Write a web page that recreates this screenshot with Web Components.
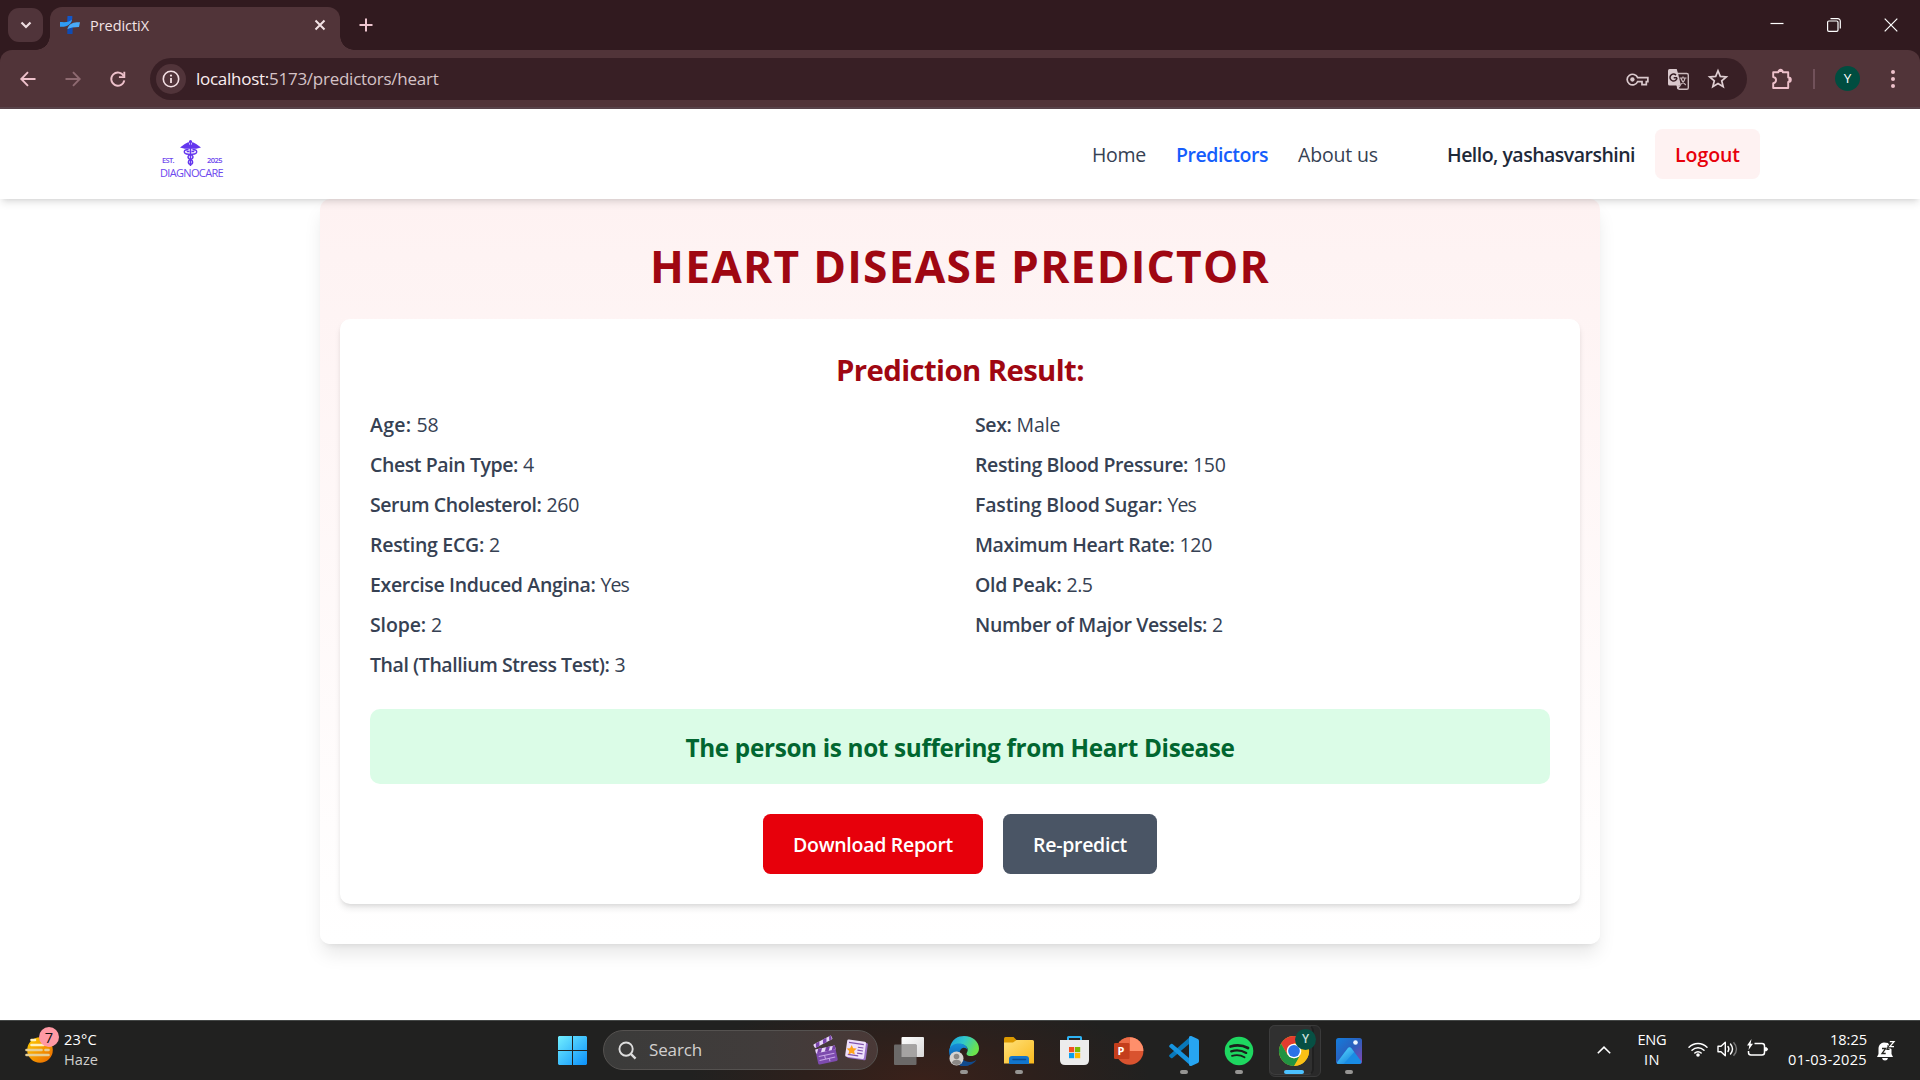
<!DOCTYPE html>
<html lang="en">
<head>
<meta charset="utf-8">
<title>PredictiX</title>
<style>
html,body{margin:0;padding:0;width:1920px;height:1080px;overflow:hidden;background:#fff}
body{font-family:"Open Sans","Noto Sans",sans-serif;font-size:19.5px;display:flex;flex-direction:column}
</style>
</head>
<body>
<browser-chrome></browser-chrome>
<site-header></site-header>
<predictor-page></predictor-page>
<task-bar></task-bar>
<script>
const ICONS = {
  down:['0 0 12 8','<path d="M1.5 1.5 6 6l4.500-4.500" fill="none" stroke="#eedde0" stroke-width="2.200"/>'],
  fav:['0 0 20 18','<path d="M7.500 0h4.800v2.500C12 6 9.500 8 7 9.500z" fill="#1257c9"/><path d="M12.500 18H7.300v-3c.4-3.500 3-5 5.600-6.500z" fill="#0f4cb4"/><path d="M0 6c5 .3 9 .5 12-2.500C11.600 7.500 8 11.300 0 10.800z" fill="#2f9cf5"/><path d="M20 6.300c-4-.2-11 .1-12.700 6.900C10 11.500 14 11.300 19 11z" fill="#49aaf8"/>'],
  x:['0 0 12 12','<path d="m1.500 1.500 9 9m0-9-9 9" stroke="#f2e2e5" stroke-width="2" fill="none"/>'],
  plus:['0 0 14 14','<path d="M7 .5v13M.5 7h13" stroke="#eec5cf" stroke-width="2"/>'],
  min:['0 0 14 14','<path d="M.5 5.500h13" stroke="#fff" stroke-width="1.200"/>'],
  restore:['0 0 14 14','<rect x=".6" y="3" width="10.400" height="10.400" rx="1.300" fill="none" stroke="#fff" stroke-width="1.200"/><path d="M3.500.7h7.300a2.500 2.500 0 0 1 2.500 2.500v7.300" fill="none" stroke="#fff" stroke-width="1.200"/>'],
  close:['0 0 14 14','<path d="m.7.7 12.600 12.600m0-12.600L.7 13.300" stroke="#fff" stroke-width="1.200"/>'],
  back:['0 0 16 16','<path d="M15.500 8H1.700M8 1.200 1.300 8 8 14.800" stroke="#eec1cb" stroke-width="1.900" fill="none"/>'],
  fwd:['0 0 16 16','<path d="M.5 8h13.800M8 1.200 14.700 8 8 14.800" stroke="#8e6a71" stroke-width="1.900" fill="none"/>'],
  reload:['0 0 17 17','<path d="M14.600 5.500A7 7 0 1 0 15.200 10" fill="none" stroke="#eec1cb" stroke-width="2"/><path d="M15.200.8v5.700H9.500" fill="none" stroke="#eec1cb" stroke-width="2"/>'],
  info:['0 0 18 18','<circle cx="9" cy="9" r="7.700" fill="none" stroke="#f3dfe3" stroke-width="1.600"/><path d="M9 8v5" stroke="#f3dfe3" stroke-width="1.800"/><circle cx="9" cy="5.600" r="1.100" fill="#f3dfe3"/>'],
  key:['0 0 24 14','<path d="M12.200 5h10.600v4.200h-1.600v3.300h-4.500V9.200h-4.500A5.700 5.700 0 1 1 12.200 5z" fill="none" stroke="#d9c8cc" stroke-width="1.800"/><circle cx="6.700" cy="7" r="2.300" fill="#d9c8cc"/>'],
  trans:['0 0 21 21','<path d="M9 4.500h9.700q1.600 0 1.600 1.600v12.600q0 1.600-1.600 1.600H11l-2-5" fill="none" stroke="#cbbabd" stroke-width="1.400"/><path d="M1.500 0h7.200l1.100 3.800L13 16.500H1.500Q0 16.500 0 15V1.500Q0 0 1.500 0z" fill="#d9c8cc"/><path d="M13 16.500 9.300 20.500 8.500 16z" fill="#d9c8cc"/><path d="M9 8.700H5.700M9 8.700a3.500 3.500 0 1 1-1-2.600" fill="none" stroke="#381f25" stroke-width="1.500"/><path d="M11.500 9h7M15 7.500V9m2 0c-.4 2.500-2 5-4.500 6.500M13 9.500c.8 2.500 2.500 4.700 4.800 6.500" fill="none" stroke="#cbbabd" stroke-width="1.200"/>'],
  star:['0 0 20 20','<path d="m10 1.800 2.300 5.600 6 .5-4.600 3.900 1.500 5.900-5.200-3.200-5.200 3.200 1.500-5.900L1.700 7.900l6-.5z" fill="none" stroke="#dfced2" stroke-width="1.700"/>'],
  puzzle:['0 0 22 22','<path d="M2.200 4.200H7.400C7.400 1 11.800 1 11.800 4.200H17.200V9.400C20.700 9.400 20.700 14 17.200 14V20H2.200V15.200C6 14.800 6 9.400 2.200 9z" fill="none" stroke="#eec1cb" stroke-width="1.900" stroke-linejoin="round"/><path d="M7.500 4c0-3.500 4.200-3.500 4.200 0zM17.400 9.500c3.500 0 3.500 4.300 0 4.300z" fill="#eec1cb"/>'],
  dots:['0 0 6 20','<g fill="#eec1cb"><circle cx="3" cy="3" r="2"/><circle cx="3" cy="10" r="2"/><circle cx="3" cy="17" r="2"/></g>'],
  caduceus:['0 0 22 27','<g fill="#6437ee"><circle cx="11" cy="1.700" r="1.700"/><path d="M0 7.500 5 4l4-2 1 3h2l1-3 4 2 5 3.500-5 1.300H5z"/><path d="M10.200 3h1.600v23h-1.600z"/></g><g fill="none" stroke="#6437ee" stroke-width="1.500"><path d="M9 9.500c-6 0-6 4.500 0 4.700 6 .4 5.500 4.600 2 5.300-3 .7-3 4.500 0 5"/><path d="M13 9.500c6 0 6 4.500 0 4.700-6 .4-5.500 4.600-2 5.300 3 .7 3 4.500 0 5"/><path d="M7 11.500h3M12 11.500h3"/></g>'],
  haze:['0 0 30 28','<defs><linearGradient id="h" x2="1" y2="1"><stop stop-color="#ffd000"/><stop offset="1" stop-color="#ea6500"/></linearGradient></defs><circle cx="15" cy="15" r="12.800" fill="url(#h)"/><g stroke-linecap="round" stroke-width="2.600"><path d="M6.500 5H10M6.500 10h12M23 10h3" stroke="#fff1bd"/><path d="M1.500 15h15M20.500 15h3M1.500 20h22" stroke="#e6cf96"/></g>'],
  start:['0 0 29 29','<defs><linearGradient id="sw" x1="0" y1="0" x2="29" y2="29" gradientUnits="userSpaceOnUse"><stop stop-color="#72efff"/><stop offset="1" stop-color="#0b90fa"/></linearGradient></defs><path d="M1 0h13v14H0V1zM15 0h13l1 1v13H15zM0 15h14v14H1l-1-1zM15 15h14v13l-1 1H15z" fill="url(#sw)"/>'],
  search:['0 0 20 20','<circle cx="8.500" cy="8.500" r="7" fill="none" stroke="#ddd" stroke-width="2"/><path d="m13.500 13.500 5 5" stroke="#ddd" stroke-width="2.400"/>'],
  clap:['0 0 25 28','<g transform="rotate(-12 12 20)"><rect x="3" y="10.500" width="20" height="15.500" rx="1.500" fill="#7d4bae"/><path d="M3 10.500h20v4H3z" fill="#e6d5f6"/><path d="m6 10.500-2 4h4l2-4zm8 0-2 4h4l2-4zm7 0-2 4h4v-4z" fill="#7640a5"/><path d="M5 18h16M5 22h16M11 18v4M15 22v3" stroke="#c7a5e6" stroke-width="1"/></g><g transform="rotate(-28 1 9)"><rect x="0" y="7" width="20" height="4" rx=".8" fill="#ead9fa"/><path d="m3 7-2 4h4l2-4zm8 0-2 4h4l2-4zm7 0-2 4h3l1-4z" fill="#7b45ae"/></g>'],
  news:['0 0 23 22','<g transform="rotate(8 11 11)"><rect x="3" y="2.500" width="19" height="17.500" rx="1.500" fill="#9870c5"/><rect x="1" y="1.500" width="19" height="17.500" rx="1.500" fill="#eee0fb"/><path d="M3 4.500h15M12.500 8H18M12.500 11H18M12.500 14H18M3.500 16.500H14" stroke="#8054ad" stroke-width="1.200"/></g><path d="m6.700 6 1.500 3.200 3.500.4-2.600 2.400.7 3.600-3.200-1.700-3.200 1.700.8-3.600-2.600-2.400 3.500-.4z" fill="#ffa31a"/>'],
  task:['0 0 30 28','<defs><linearGradient id="t" x2="1" y2="1"><stop stop-color="#fff"/><stop offset="1" stop-color="#d8d8d8"/></linearGradient></defs><rect x="7.500" width="22.500" height="20" rx="1" fill="url(#t)"/><rect y="7.500" width="22.500" height="20.500" rx="1" fill="#6b6968"/><path d="M7.500 7.500h15V20h-15z" fill="#a5a3a2"/>'],
  edge:['0 0 30 30','<defs><linearGradient id="e1" x2="1" y2=".4"><stop stop-color="#159ee0"/><stop offset=".5" stop-color="#32c8ca"/><stop offset="1" stop-color="#6be34c"/></linearGradient><linearGradient id="e2" x2="0" y2="1"><stop stop-color="#168fd9"/><stop offset="1" stop-color="#0b4fa5"/></linearGradient></defs><path d="M1 11C3 3 9 0 15 0c9 0 15 6 15 12.500 0 5-4 7.500-8 7.500-4.500 0-5-2-4-3.500 3-5-3-9-8-8.500-4 0-7 2-9 5z" fill="url(#e1)"/><path d="M0 15C0 10 5 7.500 10 7.500c4.500 0 8.500 2.500 8.500 6.500-1.500-3-6-3.500-7.500 1-1.500 5 3 11 9 14.200Q17.500 30 15 30C6.500 30 0 23 0 15z" fill="url(#e2)"/><path d="M10.500 14.500c-2 6 4 11.500 10.500 11.500 3 0 5-1.200 6.500-2.200C25 28 20 30 15 30c-7 0-10-10-4.500-15.500z" fill="#104a8d"/><circle cx="7.500" cy="22.500" r="7" fill="#d5d2cf"/><circle cx="7.500" cy="20.500" r="2.800" fill="#8b8886"/><path d="M2.800 27c.5-4.500 9-4.500 9.500 0-2 2.500-7 2.500-9.500 0z" fill="#8b8886"/>'],
  folder:['0 0 30 27','<defs><linearGradient id="f" x2="1" y2="1"><stop stop-color="#ffe17a"/><stop offset="1" stop-color="#f9b91d"/></linearGradient></defs><path d="M0 1.500Q0 0 1.500 0H9.500L13 3.500V9H0z" fill="#dc9900"/><path d="M0 5.500h9L12.500 3H28.500Q30 3 30 4.500V26.500H0z" fill="url(#f)"/><path d="M5 27v-5q0-3 3-3H22q3 0 3 3v5z" fill="#1275cc"/><path d="M9 22.500h12.500" stroke="#0a4c91" stroke-width="1.500" stroke-linecap="round"/>'],
  store:['0 0 29 29','<path d="M8 6V1.500Q8 1 8.500 1h12Q21 1 21 1.500V6" fill="none" stroke="#2eb2f2" stroke-width="2"/><path d="M0 4h29v20q0 5-5 5H5q-5 0-5-5z" fill="#ececec"/><path d="M9 11h5.200v5.200H9z" fill="#f25022"/><path d="M15 11h5.200v5.200H15z" fill="#7fba00"/><path d="M9 17h5.200v5.200H9z" fill="#0a9fee"/><path d="M15 17h5.200v5.200H15z" fill="#ffb900"/>'],
  ppt:['0 0 30 28','<circle cx="15.700" cy="14" r="13.700" fill="#d9532f"/><path d="M15.700.3A13.700 13.700 0 0 1 29.400 14H15.700z" fill="#ff8f6b"/><path d="M15.700.3V14H2A13.700 13.700 0 0 1 15.700.3z" fill="#ed6c47"/><rect x="0" y="6" width="15.500" height="16" rx="1.300" fill="#c43e1c"/><text x="3.500" y="18" font-family="Open Sans" font-weight="700" font-size="11" fill="#fff">P</text>'],
  code:['0 0 30 30','<path d="M22 0 20 8 3.500 22q-.8.6-1.600 0L.4 20.500q-.6-.8 0-1.500z" fill="#0878ba"/><path d="M22 30 20 22 3.500 8q-.8-.6-1.600 0L.4 9.500q-.6.800 0 1.500z" fill="#1694df"/><path d="m22.300 0 6.500 3Q30 3.600 30 5v20q0 1.400-1.200 2L22.300 30q-1.300.4-2.300-.7 0-.5 0-1.300V2q0-.8 0-1.300Q21-.4 22.300 0z" fill="#27a5f2"/>'],
  spotify:['0 0 30 30','<circle cx="15" cy="15" r="14.300" fill="#1ed760"/><g fill="none" stroke="#1b1f1c" stroke-linecap="round"><path d="M6.500 10.500c6-1.800 12.500-1.200 17.500 1.500" stroke-width="2.700"/><path d="M7.200 15.300c5.300-1.500 10.800-.8 15 1.600" stroke-width="2.300"/><path d="M8 19.800c4.300-1.200 9-.7 12.500 1.400" stroke-width="1.900"/></g>'],
  chrome:['0 0 30 30','<circle cx="15" cy="15" r="15" fill="#fbc116"/><path d="M2 7.500a15 15 0 0 1 26 0H15L8.500 18.700z" fill="#e33b2e"/><path d="M2 7.500 8.500 18.700l6.500 3.800h5.500L15 30A15 15 0 0 1 2 7.500z" fill="#229342"/><path d="m15 22.500 6.500-3.700L15 30z" fill="#229342"/><path d="M28 7.500H15v15l6.500-3.800L15 30A15 15 0 0 0 28 7.500z" fill="#fbc116"/><circle cx="15" cy="15" r="7.300" fill="#fff"/><circle cx="15" cy="15" r="5.900" fill="#2a72e6"/>'],
  photos:['0 0 26 26','<defs><linearGradient id="p" x2="1" y2="1"><stop stop-color="#147ddc"/><stop offset=".5" stop-color="#2a5fbd"/><stop offset="1" stop-color="#8a45b0"/></linearGradient><linearGradient id="p2" x2=".7" y2="1"><stop stop-color="#5de0ff"/><stop offset="1" stop-color="#1b87e0"/></linearGradient></defs><rect width="26" height="26" rx="2.500" fill="url(#p)"/><path d="M1 24.500 12 10q1.500-1.700 3.200 0L25.500 23.500Q25 26 23.500 26h-21Q1 26 1 24.500z" fill="#198ce4"/><path d="M1 24.500 12 10q1.500-1.700 3.200 0l3 4L7.500 26h-5Q1 26 1 24.500z" fill="url(#p2)"/><circle cx="19.500" cy="4.500" r="2.300" fill="#eef7ff"/>'],
  up:['0 0 14 8','<path d="m.8 7.200 6.200-6 6.200 6" fill="none" stroke="#fff" stroke-width="1.600"/>'],
  wifi:['0 0 20 16','<g fill="none" stroke="#fff" stroke-width="1.500" stroke-linecap="round"><path d="M1 6.200a12.700 12.700 0 0 1 18 0M4 9.200a8.500 8.500 0 0 1 12 0M6.800 12a4.500 4.500 0 0 1 6.400 0"/></g><circle cx="10" cy="14" r="1.800" fill="#fff"/>'],
  vol:['0 0 21 16','<path d="M1 5.300h3L8.300 1.300v13.400L4 10.700H1z" fill="none" stroke="#fff" stroke-width="1.400" stroke-linejoin="round"/><path d="M11 5.500q1.800 2.500 0 5M13.500 3q4 5 0 10" fill="none" stroke="#fff" stroke-width="1.400" stroke-linecap="round"/><path d="M16.500 1.200q6 6.800 0 13.600" fill="none" stroke="#777" stroke-width="1.400"/>'],
  bat:['0 0 21 18','<path d="M7.500 4.500H15q2.500 0 2.500 2.500v6.500q0 2.500-2.500 2.500H4q-2.500 0-2.500-2.500V12" fill="none" stroke="#fff" stroke-width="1.500"/><path d="M18.500 8.500v3.500q2-.2 2-1.700t-2-1.800z" fill="#fff" stroke="#fff"/><path d="M4.500 0 0 6.500h2.300L1.500 11 6 4.800H3.600z" fill="#fff"/>'],
  bell:['0 0 18 20','<path d="M7 1.500C3 2 1.500 5 1.500 8v5L0 16h16l-1.500-3V8.500L11 2z" fill="#fff"/><path d="M5 17h6q-.5 2.500-3 2.500T5 17z" fill="#fff"/><path d="M5 7.500h3.700L5 12.500h3.700" fill="none" stroke="#252520" stroke-width="1.300"/><path d="M10 5h2.500L10 8.500h2.500" fill="none" stroke="#252520" stroke-width="1.100"/><path d="M12.500.7H17L12.700 6H17" fill="none" stroke="#252520" stroke-width="3.200"/><path d="M12.800.7H17L12.800 5.700H17" fill="none" stroke="#fff" stroke-width="1.300"/>']
};

function element(name, css, html) {
  customElements.define(name, class extends HTMLElement {
    constructor() {
      super();
      this.attachShadow({mode:'open'}).innerHTML = `<style>*{box-sizing:border-box}${css}</style>${html}`;
    }
  });
}

/* Inline icon: <ui-icon n="name" w="px" h="px"> */
customElements.define('ui-icon', class extends HTMLElement {
  connectedCallback() {
    if (this.shadowRoot) return;
    const [box, body] = ICONS[this.getAttribute('n')];
    this.attachShadow({mode:'open'}).innerHTML =
      `<style>:host{display:block;flex:none}svg{display:block;overflow:visible}</style><svg width="${this.getAttribute('w')}" height="${this.getAttribute('h')}" viewBox="${box}" preserveAspectRatio="none">${body}</svg>`;
  }
});

/* Single-line label tracked so that it fills a given advance width */
const fits = [];
customElements.define('fit-text', class extends HTMLElement {
  connectedCallback() {
    if (this.shadowRoot) return;
    this.attachShadow({mode:'open'}).innerHTML = '<style>:host{display:inline-block;white-space:nowrap;flex:none}span{display:inline-block}</style><span><slot></slot></span>';
    fits.push(this);
  }
  fit() {
    const w = +this.getAttribute('w'), s = this.shadowRoot.querySelector('span');
    s.style.letterSpacing = '0px';
    const natural = s.getBoundingClientRect().width;
    s.style.letterSpacing = (w - natural) / this.textContent.length + 'px';
    this.style.width = w + 'px';
  }
});

element('tab-strip', `
:host{display:flex;align-items:flex-start;height:50px;background:#311a1f;padding:0 22px 0 8px}
.menu{width:35px;height:34px;border-radius:11px;background:#50343a;margin-top:8px;display:grid;place-items:center}
.tab{position:relative;margin:7px 0 0 7px;width:290px;height:43px;background:#513439;border-radius:12px 12px 0 0;display:flex;align-items:center;padding:0 14px 7px 10px;color:#f3e3e6;font-size:14.500px}
.tab:before,.tab:after{content:"";position:absolute;bottom:0;width:14px;height:14px}
.tab:before{left:-14px;background:radial-gradient(circle at 0 0,transparent 13.500px,#513439 14px)}
.tab:after{right:-14px;background:radial-gradient(circle at 100% 0,transparent 13.500px,#513439 14px)}
.tab fit-text{margin-left:10px}.tab .x{margin-left:auto}
.plus{margin:18px 0 0 19px}
.win{margin:18px 0 0 auto;display:flex;gap:43px}`,
`<div class="menu"><ui-icon n="down" w="12" h="8"></ui-icon></div>
<div class="tab"><ui-icon n="fav" w="20" h="18"></ui-icon><fit-text w="59">PredictiX</fit-text><ui-icon class="x" n="x" w="12" h="12"></ui-icon></div>
<ui-icon class="plus" n="plus" w="14" h="14"></ui-icon>
<div class="win"><ui-icon n="min" w="14" h="14"></ui-icon><ui-icon n="restore" w="14" h="14"></ui-icon><ui-icon n="close" w="14" h="14"></ui-icon></div>`);

element('tool-bar', `
:host{display:block;background:#311a1f}
.bar{height:59px;background:#513439;border-bottom:2px solid #58434a;border-radius:12px 12px 0 0;display:flex;align-items:center;padding:1px 24px 0 20px}
.nav{display:flex;gap:29px;width:130px;padding-bottom:1px}
.omni{width:1597px;height:42px;border-radius:21px;background:#381f25;display:flex;align-items:center;padding:0 19px 0 6px;color:#d5c3c7;font-size:17px}
.omni fit-text{margin-bottom:1px}
.info{width:30px;height:30px;border-radius:50%;background:#51343a;display:grid;place-items:center;margin-right:10px}
.host{color:#fbeef0}.acts{margin-left:auto;display:flex;align-items:center;gap:19px}
.ext{margin-left:24px;margin-bottom:1px}.sep{width:2px;height:20px;background:#71515a;margin-left:20px}
.av{width:25px;height:25px;border-radius:50%;background:#004d40;color:#fff;font-size:13.500px;display:grid;place-items:center;margin-left:20px;line-height:25px;margin-bottom:1px}
.dots{margin-left:auto}`,
`<div class="bar"><div class="nav"><ui-icon n="back" w="16" h="16"></ui-icon><ui-icon n="fwd" w="16" h="16"></ui-icon><ui-icon n="reload" w="16" h="16"></ui-icon></div>
<div class="omni"><div class="info"><ui-icon n="info" w="18" h="18"></ui-icon></div><fit-text class="host" w="73">localhost:</fit-text><fit-text w="169.500">5173/predictors/heart</fit-text>
<div class="acts"><ui-icon n="key" w="23" h="13"></ui-icon><ui-icon n="trans" w="21" h="21"></ui-icon><ui-icon n="star" w="20" h="20"></ui-icon></div></div>
<ui-icon class="ext" n="puzzle" w="22" h="22"></ui-icon><div class="sep"></div><div class="av">Y</div><ui-icon class="dots" n="dots" w="6" h="20"></ui-icon></div>`);

element('browser-chrome', `:host{display:block;flex:none}tool-bar{display:block}`, `<tab-strip></tab-strip><tool-bar></tool-bar>`);

element('brand-logo', `
:host{display:flex;flex-direction:column;width:63px;color:#6d47ee;margin-top:11px}
.top{display:flex;justify-content:space-between;align-items:flex-end;height:27px;padding:0 1px 0 2px}
.top fit-text{font-size:7.500px;font-weight:600;line-height:9px;margin-bottom:2px}
.name{font-size:11px;line-height:12px;margin-top:0}`,
`<div class="top"><fit-text w="12">EST.</fit-text><ui-icon n="caduceus" w="21" h="27"></ui-icon><fit-text w="15">2025</fit-text></div><fit-text class="name" w="63">DIAGNOCARE</fit-text>`);

element('nav-link', `:host{display:block;color:#364153}:host([active]){color:#155dfc;font-weight:600}`, `<slot></slot>`);

element('site-header', `
:host{display:flex;align-items:center;flex:none;height:90px;padding:0 160px;background:#fff;position:relative;z-index:2;box-shadow:0 5px 7.500px -1px #0000001a,0 2.500px 5px -2.500px #0000001a;line-height:30px}
nav{display:flex;gap:30px;margin-left:auto;padding-top:2px}
.hello{color:#1e2939;font-weight:600;margin-left:69px;padding-top:2px}
button{font:inherit;font-weight:600;color:#e7000b;background:#fef2f2;border:0;border-radius:7.500px;padding:11px 20px 9px;margin-left:20px;line-height:30px}button fit-text{display:block}`,
`<brand-logo></brand-logo><nav><nav-link><fit-text w="54">Home</fit-text></nav-link><nav-link active><fit-text w="92">Predictors</fit-text></nav-link><nav-link><fit-text w="80">About us</fit-text></nav-link></nav>
<fit-text class="hello" w="188">Hello, yashasvarshini</fit-text><button><fit-text w="65">Logout</fit-text></button>`);

/* Label/value pair */
customElements.define('result-item', class extends HTMLElement {
  connectedCallback() {
    if (this.shadowRoot) return;
    const [l, lw, v, vw] = this.getAttribute('data').split('|');
    this.attachShadow({mode:'open'}).innerHTML = `<style>:host{display:flex;gap:5px;line-height:30px;padding-top:1px;height:29px;color:#364153}.l{font-weight:600}</style><fit-text class="l" w="${lw}">${l}</fit-text><fit-text w="${vw}">${v}</fit-text>`;
  }
});

element('outcome-banner', `:host{display:block;margin-top:30px;height:75px;padding:20px;border-radius:10px;background:#dbfce7;color:#016630;font-size:24.300px;font-weight:700;line-height:38px;text-align:center}`, `<slot></slot>`);

element('action-button', `:host{display:block}button{display:block;font:inherit;font-weight:600;border:0;border-radius:7.500px;height:60px;padding:16px 30px 14px;line-height:30px;color:#fff;background:var(--fill)}button ::slotted(fit-text){display:block}`, `<button><slot></slot></button>`);

const rows = [
  ['Age:',41.500,'58',22],['Sex:',36.500,'Male',44],
  ['Chest Pain Type:',148,'4',11],['Resting Blood Pressure:',213,'150',32.500],
  ['Serum Cholesterol:',171.500,'260',32.500],['Fasting Blood Sugar:',187.500,'Yes',28.500],
  ['Resting ECG:',114,'2',11],['Maximum Heart Rate:',199.500,'120',32.500],
  ['Exercise Induced Angina:',225.500,'Yes',28.500],['Old Peak:',86.500,'2.5',26],
  ['Slope:',56,'2',11],['Number of Major Vessels:',232,'2',11],
  ['Thal (Thallium Stress Test):',239.500,'3',11]
];
element('predictor-card', `
:host{display:block;width:1280px;padding:40px 20px;border-radius:10px;background:linear-gradient(#fef2f2,#fff);box-shadow:0 12.500px 18.750px -3.750px #0000001a,0 5px 7.500px -5px #0000001a}
h1{margin:0 0 30px;height:50px;line-height:54px;font-size:44.300px;font-weight:700;color:#9f0712;text-align:center}
section{background:#fff;border-radius:10px;padding:30px;box-shadow:0 5px 7.500px -1.250px #0000001a,0 2.500px 5px -2.500px #0000001a}
h2{margin:0 0 20px;height:40px;line-height:43px;font-size:29.300px;font-weight:700;color:#9f0712;text-align:center}
.grid{display:grid;grid-template-columns:1fr 1fr;grid-auto-rows:30px;gap:10px 30px}
.acts{display:flex;justify-content:center;gap:20px;margin-top:30px}`,
`<h1><fit-text w="620">HEART DISEASE PREDICTOR</fit-text></h1><section><h2><fit-text w="248">Prediction Result:</fit-text></h2><div class="grid">${rows.map(r=>`<result-item data="${r.join('|')}"></result-item>`).join('')}</div>
<outcome-banner><fit-text w="549">The person is not suffering from Heart Disease</fit-text></outcome-banner>
<div class="acts"><action-button style="--fill:#e7000b"><fit-text w="160">Download Report</fit-text></action-button><action-button style="--fill:#4a5565"><fit-text w="94">Re-predict</fit-text></action-button></div></section>`);

element('predictor-page', `:host{display:flex;justify-content:center;align-items:flex-start;flex:none;height:821px;background:#fff}`, `<predictor-card></predictor-card>`);

element('app-slot', `
:host{position:relative;display:grid;place-items:center;width:50px;height:59px;flex:none}
.tile{display:none}
:host([run]):after{content:"";position:absolute;left:21px;top:49px;width:8px;height:4px;border-radius:2px;background:#969593}
:host([active]):before{content:"";position:absolute;left:0;top:4px;width:50px;height:50px;border-radius:6px;background:#292929;border:1px solid #3a3a3a}
:host([active]) .tile{display:block;position:absolute;left:0;top:4px;width:45px;height:50px;border-radius:6px;background:#303030;border:1px solid #3c3c3c;border-right:2px solid #202020}
:host([active]):after{left:15px;width:20px;background:#4cc2ff}
::slotted(ui-icon){position:relative}
::slotted(.badge){position:absolute;left:26px;top:8px;width:21px;height:21px;border-radius:50%;background:#075044;color:#cbe0dc;font-size:12px;font-weight:600;line-height:20px;text-align:center}`, `<div class="tile"></div><slot></slot>`);

element('task-bar', `
:host{display:flex;flex:none;height:60px;border-top:1px solid #444746;background:radial-gradient(ellipse 230px 90px at 920px 60px,#3a211a 0%,#2d201c 50%,transparent 100%),#212120;color:#fff;font-size:14.600px;line-height:20px}
.weather{display:flex;width:558px;padding:8px 0 0 25px;position:relative}
.weather ui-icon{margin-top:6px}.n{position:absolute;left:39px;top:6px;width:20px;height:20px;border-radius:50%;background:#ff99a4;color:#111;text-align:center;line-height:20px}
.col{display:flex;flex-direction:column}.weather .col{margin-left:9px;color:#fff}.weather .col :last-child{color:#cfcfcd}
.start{margin-top:15px}
.search{margin:9px 0 0 16px;width:275px;height:40px;border-radius:20px;background:linear-gradient(90deg,#3b3b3a,#413c3b 60%,#4a3937);border:1px solid #555250;display:flex;align-items:center;padding:0 9px 0 14px;font-size:17px;color:#d2d0cf}
.search fit-text{margin:0 auto 0 12px}.search .nw{margin-left:6px}.search .cl{margin-top:2px}
.apps{display:flex;gap:5px;margin-left:6px}
.tray{display:flex;margin-left:auto;padding-right:25px}
.up{margin:25px 26px 0 0}.lang{align-items:center;width:30px;margin:8px 21px 0 0}
.wifi{margin:20px 9px 0 0}.vol{margin:20px 9px 0 0}.bat{margin:18px 20px 0 0}
.clock{align-items:flex-end;margin:8px 10px 0 0}.bell{margin-top:20px}`,
`<div class="weather"><ui-icon n="haze" w="30" h="28"></ui-icon><div class="n">7</div><div class="col"><fit-text w="33">23°C</fit-text><fit-text w="34">Haze</fit-text></div></div>
<ui-icon class="start" n="start" w="29" h="29"></ui-icon>
<div class="search"><ui-icon n="search" w="19" h="19"></ui-icon><fit-text w="53">Search</fit-text><ui-icon class="cl" n="clap" w="25" h="28"></ui-icon><ui-icon class="nw" n="news" w="23" h="22"></ui-icon></div>
<div class="apps"><app-slot><ui-icon n="task" w="30" h="28"></ui-icon></app-slot><app-slot run><ui-icon n="edge" w="30" h="30"></ui-icon></app-slot><app-slot run><ui-icon n="folder" w="30" h="27"></ui-icon></app-slot><app-slot><ui-icon n="store" w="29" h="29"></ui-icon></app-slot><app-slot><ui-icon n="ppt" w="30" h="28"></ui-icon></app-slot><app-slot run><ui-icon n="code" w="30" h="30"></ui-icon></app-slot><app-slot run><ui-icon n="spotify" w="30" h="30"></ui-icon></app-slot><app-slot run active><ui-icon n="chrome" w="30" h="30"></ui-icon><div class="badge">Y</div></app-slot><app-slot run><ui-icon n="photos" w="26" h="26"></ui-icon></app-slot></div>
<div class="tray"><ui-icon class="up" n="up" w="14" h="8"></ui-icon><div class="col lang"><fit-text w="29">ENG</fit-text><fit-text w="16">IN</fit-text></div><ui-icon class="wifi" n="wifi" w="20" h="16"></ui-icon><ui-icon class="vol" n="vol" w="21" h="16"></ui-icon><ui-icon class="bat" n="bat" w="21" h="18"></ui-icon><div class="col clock"><fit-text w="37">18:25</fit-text><fit-text w="79">01-03-2025</fit-text></div><ui-icon class="bell" n="bell" w="18" h="20"></ui-icon></div>`);

fits.forEach(f => f.fit());
</script>
</body>
</html>
